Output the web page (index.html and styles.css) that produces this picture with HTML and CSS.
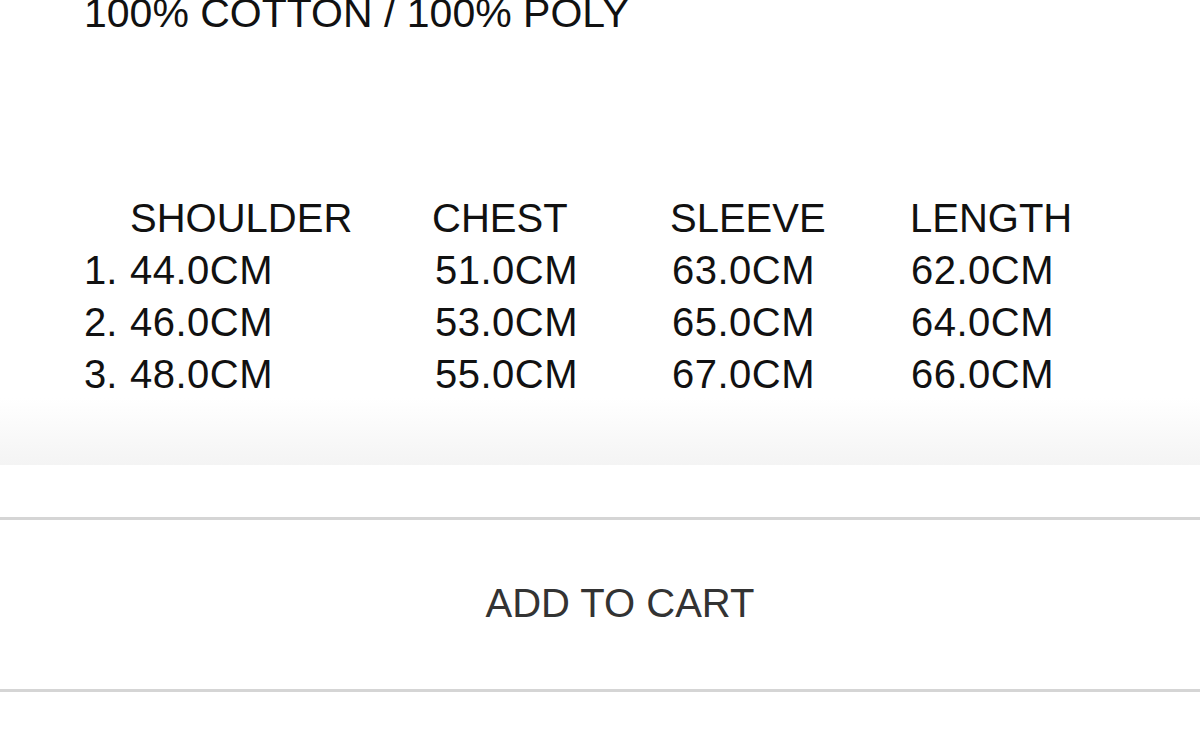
FILE: index.html
```html
<!DOCTYPE html>
<html lang="en">
<head>
<meta charset="utf-8">
<title>Product details</title>
<link rel="stylesheet" href="styles.css">
</head>
<body>
<div class="page">
  <section class="details">
    <p class="material">100% COTTON / 100% POLY</p>
    <div class="sizes">
      <span class="num"></span><span>SHOULDER</span><span>CHEST</span><span>SLEEVE</span><span>LENGTH</span>
      <span class="num">1.</span><span class="val">44.0CM</span><span class="val v2">51.0CM</span><span class="val v3">63.0CM</span><span class="val v4">62.0CM</span>
      <span class="num">2.</span><span class="val">46.0CM</span><span class="val v2">53.0CM</span><span class="val v3">65.0CM</span><span class="val v4">64.0CM</span>
      <span class="num">3.</span><span class="val">48.0CM</span><span class="val v2">55.0CM</span><span class="val v3">67.0CM</span><span class="val v4">66.0CM</span>
    </div>
  </section>
  <div class="spacer"></div>
  <button class="cart" type="button">ADD TO CART</button>
</div>
</body>
</html>
```

FILE: styles.css
```css
html, body {
  margin: 0;
  padding: 0;
  background: #ffffff;
}

.page {
  width: 1200px;
  height: 740px;
  overflow: hidden;
  font-family: "Liberation Sans", Arial, Helvetica, sans-serif;
  color: #111111;
}

.details {
  display: flow-root;
  height: 465px;
  background: linear-gradient(to bottom, #ffffff 0, #ffffff 398px, #f4f4f4 465px);
  padding-left: 84px;
  box-sizing: border-box;
}

.material {
  margin: -13px 0 0 0;
  font-size: 41px;
  line-height: 52px;
}

.sizes {
  margin-top: 153px;
  display: grid;
  grid-template-columns: 46px 302px 238px 240px auto;
  font-size: 40px;
  line-height: 52px;
}

.sizes .val {
  letter-spacing: 0.5px;
}

.sizes .v2 {
  padding-left: 3px;
}

.sizes .v3 {
  padding-left: 2px;
}

.sizes .v4 {
  padding-left: 1px;
}

.spacer {
  height: 52px;
}

.cart {
  display: block;
  width: 100%;
  height: 175px;
  margin: 0;
  padding: 0 0 4px 40px;
  border: 0;
  border-top: 3px solid #d5d5d5;
  border-bottom: 3px solid #d5d5d5;
  background: #ffffff;
  font-family: "Liberation Sans", Arial, Helvetica, sans-serif;
  font-size: 40px;
  line-height: 46px;
  color: #333333;
  text-align: center;
}
```
